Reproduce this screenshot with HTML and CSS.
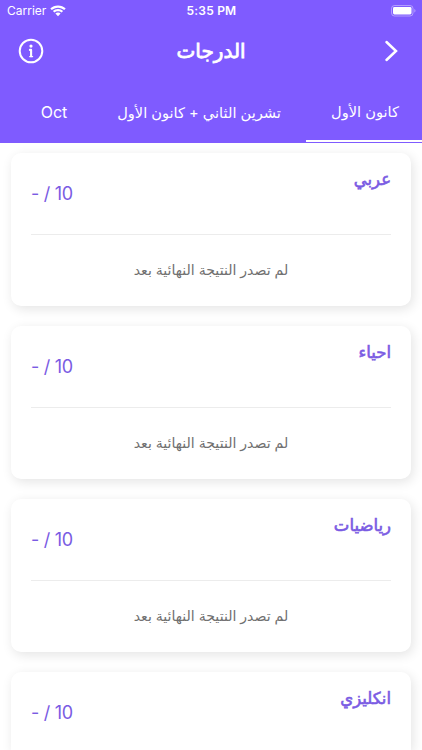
FILE: index.html
```
<!DOCTYPE html>
<html lang="ar" dir="rtl">
<head>
  <meta charset="UTF-8" />
  <meta name="viewport" content="width=device-width, initial-scale=1.0"/>
  <title>الدرجات</title>
  <link rel="stylesheet" href="styles.css">
</head>
<body>

  <header>
    <div class="status-bar" dir="ltr">
      <div class="carrier">
        <span>Carrier</span>
        <svg width="16" height="12" viewBox="0 0 16 12" fill="#fff">
          <path d="M8 0.6C5 0.6 2.3 1.7 0.3 3.6L1.8 5.1C3.4 3.6 5.6 2.7 8 2.7s4.6 0.9 6.2 2.4l1.5-1.5C13.7 1.7 11 0.6 8 0.6z"/>
          <path d="M8 4.1c-2 0-3.8 0.8-5.1 2l1.5 1.5C5.3 6.7 6.6 6.2 8 6.2s2.7 0.5 3.6 1.4l1.5-1.5C11.8 4.9 10 4.1 8 4.1z"/>
          <path d="M8 7.6c-1 0-1.9 0.4-2.6 1L8 11.2l2.6-2.6C9.9 8 9 7.6 8 7.6z"/>
        </svg>
      </div>
      <span class="time">5:35 PM</span>
      <svg class="battery" width="25" height="12" viewBox="0 0 25 12">
        <rect x="0.5" y="0.5" width="21.5" height="10.5" rx="3" fill="none" stroke="#fff" stroke-opacity="0.4"/>
        <rect x="2" y="2" width="18.5" height="7.5" rx="1.4" fill="#fff"/>
        <path d="M23.3 4v3.6c0.8-0.3 1.2-1 1.2-1.8S24.1 4.3 23.3 4z" fill="#fff" fill-opacity="0.4"/>
      </svg>
    </div>

    <div class="title-bar" dir="ltr">
      <svg width="26" height="26" viewBox="0 0 26 26" fill="none" stroke="#fff">
        <circle cx="13" cy="13" r="11.3" stroke-width="2"/>
        <path d="M11.9 11.9H13.1V18.3" stroke-width="2.1" stroke-linecap="round" stroke-linejoin="round"/>
        <path d="M11.7 18.6h2.9" stroke-width="1.2" stroke-linecap="round"/>
        <circle cx="13" cy="8.1" r="1.6" fill="#fff" stroke="none"/>
      </svg>
      <h1>الدرجات</h1>
      <svg width="14" height="22" viewBox="0 0 14 22" fill="none" stroke="#fff" stroke-width="2.5" stroke-linecap="round">
        <path d="M2.5 2L12 11L2.5 20"/>
      </svg>
    </div>

    <nav class="tabs">
      <span class="tab active">كانون الأول</span>
      <span class="tab wide">تشرين الثاني + كانون الأول</span>
      <span class="tab latin">Oct</span>
    </nav>
  </header>

  <main>
    <section class="card">
      <div class="card-top">
        <h2>عربي</h2>
        <span class="grade" dir="ltr">- / 10</span>
      </div>
      <p>لم تصدر النتيجة النهائية بعد</p>
    </section>
    <section class="card">
      <div class="card-top">
        <h2>احياء</h2>
        <span class="grade" dir="ltr">- / 10</span>
      </div>
      <p>لم تصدر النتيجة النهائية بعد</p>
    </section>
    <section class="card">
      <div class="card-top">
        <h2>رياضيات</h2>
        <span class="grade" dir="ltr">- / 10</span>
      </div>
      <p>لم تصدر النتيجة النهائية بعد</p>
    </section>
    <section class="card last">
      <div class="card-top">
        <h2>انكليزي</h2>
        <span class="grade" dir="ltr">- / 10</span>
      </div>
    </section>
  </main>

</body>
</html>
```

FILE: styles.css
```
* {
  box-sizing: border-box;
}

body {
  font-family: Inter, "DejaVu Sans", sans-serif;
  background-color: #fff;
  margin: 0;
  height: 750px;
  display: flex;
  flex-direction: column;
  overflow: hidden;
}

header {
  flex: none;
  height: 143px;
  background-color: #7f5bff;
  color: #fff;
}

.status-bar {
  display: grid;
  grid-template-columns: 1fr auto 1fr;
  align-items: center;
  height: 21px;
  padding: 0 6px 0 7px;
  font-size: 12px;
}

.carrier {
  display: flex;
  align-items: center;
  gap: 4px;
}

.time {
  font-weight: 600;
  letter-spacing: 0.2px;
}

.battery {
  justify-self: end;
}

.title-bar {
  display: grid;
  grid-template-columns: 1fr auto 1fr;
  align-items: center;
  height: 60px;
  padding: 0 24px 0 18px;
}

.title-bar svg:last-child {
  justify-self: end;
}

h1 {
  margin: 0 0 1px 6px;
  font-size: 20px;
  font-weight: normal;
  -webkit-text-stroke: 0.8px #fff;
}

.tabs {
  display: flex;
  height: 61px;
}

.tab {
  display: flex;
  flex: none;
  align-items: center;
  justify-content: center;
  width: 116px;
  padding-top: 2px;
  font-size: 14.6px;
  white-space: nowrap;
}

.tab.wide {
  width: 214px;
}

.tab.latin {
  width: 76px;
  padding-top: 0;
  font-size: 16px;
}

.tab.active {
  padding: 3px 0 0 2px;
  border-bottom: 2px solid #fff;
}

main {
  flex: 1;
  min-height: 0;
  display: flex;
  flex-direction: column;
  gap: 20px;
  padding: 10px 11px 0;
}

.card {
  flex: none;
  height: 153px;
  padding: 0 20px;
  border-radius: 10px;
  background-color: #fff;
  box-shadow: 2px 3px 12px rgba(0, 0, 0, 0.11);
}

/* runs on below the fold */
.card.last {
  flex: 1;
  height: auto;
  min-height: 0;
  border-radius: 10px 10px 0 0;
}

.card-top {
  display: flex;
  justify-content: space-between;
  height: 82px;
  border-bottom: 1px solid #ececec;
  color: #7a5be3;
}

.last .card-top {
  height: 78px;
  border-bottom: none;
}

h2 {
  margin: 16px 0 0;
  font-size: 16.5px;
  font-weight: normal;
  -webkit-text-stroke: 0.6px #7a5be3;
}

.grade {
  margin-top: 30px;
  font-size: 18px;
  letter-spacing: -0.3px;
}

.card p {
  margin: 0;
  line-height: 70px;
  text-align: center;
  font-size: 14.1px;
  color: #707070;
}
```
